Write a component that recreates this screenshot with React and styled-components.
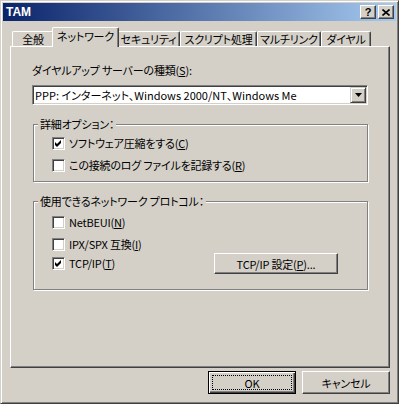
import React from "react";
import styled, { createGlobalStyle } from "styled-components";

const GlobalStyle = createGlobalStyle`
  html, body {
    margin: 0;
    padding: 0;
    background: #d4d0c8;
  }
  body {
    font-family: "Noto Sans CJK JP", "Liberation Sans", sans-serif;
    font-size: 11px;
    letter-spacing: -0.2px;
    font-feature-settings: "palt";
    color: #000;
  }
`;

const Window = styled.div`
  box-sizing: border-box;
  width: 399px;
  height: 404px;
  background: #d4d0c8;
  border: 1px solid;
  border-color: #d4d0c8 #404040 #404040 #d4d0c8;
  box-shadow: inset 1px 1px 0 #fff, inset -1px -1px 0 #808080;
  padding: 2px;
  display: flex;
  flex-direction: column;
`;

const TitleBar = styled.div`
  height: 18px;
  flex: none;
  background: linear-gradient(to right, #0a246a, #a6caf0);
  display: flex;
  align-items: center;
  padding: 0 2px 0 3px;
  gap: 2px;
`;

const TitleText = styled.div`
  flex: 1;
  color: #fff;
  font: bold 12px "Liberation Sans", sans-serif;
  letter-spacing: 0;
  line-height: 18px;
`;

const TitleButton = styled.div`
  box-sizing: border-box;
  width: 16px;
  height: 14px;
  background: #d4d0c8;
  border: 1px solid;
  border-color: #fff #404040 #404040 #fff;
  box-shadow: inset -1px -1px 0 #808080;
  display: flex;
  align-items: center;
  justify-content: center;
  font: bold 11px "Liberation Sans", sans-serif;
  line-height: 12px;
`;

const Body = styled.div`
  flex: 1;
  display: flex;
  flex-direction: column;
  padding: 0 6px 0 7px;
`;

const TabRow = styled.div`
  display: flex;
  align-items: flex-end;
  height: 20px;
  margin-top: 6px;
  margin-bottom: -1px;
  padding-left: 2px;
  position: relative;
  z-index: 1;
`;

const Tab = styled.div`
  box-sizing: border-box;
  flex: none;
  width: ${(p) => (p.$active ? p.$w + 4 : p.$w)}px;
  height: ${(p) => (p.$active ? 20 : 15)}px;
  margin: ${(p) => (p.$active ? "0 -2px" : "0 0 1px")};
  position: relative;
  z-index: ${(p) => (p.$active ? 2 : 1)};
  background: #d4d0c8;
  border-top: 1px solid #fff;
  border-left: 1px solid #fff;
  border-right: 1px solid #404040;
  border-radius: 2px 2px 0 0;
  box-shadow: inset -1px 0 0 #808080;
  display: flex;
  align-items: center;
  justify-content: center;
  padding-bottom: ${(p) => (p.$active ? 2 : 0)}px;
  line-height: 13px;
  white-space: nowrap;
`;

const Panel = styled.div`
  box-sizing: border-box;
  height: 322px;
  border: 1px solid;
  border-color: #fff #404040 #404040 #fff;
  box-shadow: inset -1px -1px 0 #808080;
  padding: 16px 21px 0 21px;
  display: flex;
  flex-direction: column;
`;

const FieldLabel = styled.div`
  height: 14px;
  line-height: 14px;
  white-space: nowrap;
`;

const Combo = styled.div`
  box-sizing: border-box;
  height: 20px;
  margin-top: 8px;
  background: #fff;
  border: 1px solid;
  border-color: #808080 #fff #fff #808080;
  box-shadow: inset 1px 1px 0 #404040, inset -1px -1px 0 #d4d0c8;
  display: flex;
  align-items: center;
  padding: 0 1px 0 2px;
`;

const ComboText = styled.div`
  flex: 1;
  line-height: 14px;
  letter-spacing: 0;
  white-space: nowrap;
`;

const DropButton = styled.div`
  box-sizing: border-box;
  width: 16px;
  height: 16px;
  background: #d4d0c8;
  border: 1px solid;
  border-color: #d4d0c8 #404040 #404040 #d4d0c8;
  box-shadow: inset 1px 1px 0 #fff, inset -1px -1px 0 #808080;
  display: flex;
  align-items: center;
  justify-content: center;
`;

const Group = styled.fieldset`
  margin: 12px 0 0 1px;
  padding: 0;
  min-width: 0;
  border: 1px solid #808080;
  box-shadow: inset 1px 1px 0 #fff, 1px 1px 0 #fff;
`;

const Legend = styled.legend`
  margin-left: 4px;
  padding: 0 2px;
  line-height: 14px;
  height: 14px;
  background: #d4d0c8;
  white-space: nowrap;
`;

const GroupBody = styled.div`
  display: flex;
  flex-direction: column;
  padding: ${(p) => p.$pt}px 0 ${(p) => p.$pb}px 18px;
`;

const CheckRow = styled.div`
  display: flex;
  align-items: center;
  gap: 4px;
  height: ${(p) => p.$h || 13}px;
  margin-top: ${(p) => p.$mt || 0}px;
  line-height: 13px;
  white-space: nowrap;
`;

const Box = styled.span`
  box-sizing: border-box;
  flex: none;
  width: 13px;
  height: 13px;
  background: #fff;
  border: 1px solid;
  border-color: #808080 #fff #fff #808080;
  box-shadow: inset 1px 1px 0 #404040, inset -1px -1px 0 #d4d0c8;
  display: flex;
  align-items: center;
  justify-content: center;
`;

const PushButton = styled.div`
  box-sizing: border-box;
  flex: none;
  position: relative;
  width: ${(p) => p.$w}px;
  height: ${(p) => p.$h}px;
  background: #d4d0c8;
  border: 1px solid;
  border-color: ${(p) => (p.$default ? "#000" : "#fff #404040 #404040 #fff")};
  box-shadow: ${(p) =>
    p.$default
      ? "inset 1px 1px 0 #fff, inset -1px -1px 0 #404040, inset -2px -2px 0 #808080"
      : "inset -1px -1px 0 #808080"};
  display: flex;
  align-items: center;
  justify-content: center;
  line-height: 14px;
  white-space: nowrap;
  ${(p) =>
    p.$default &&
    `
    &::after {
      content: "";
      position: absolute;
      inset: 3px;
      border: 1px dotted #000;
    }
  `}
`;

const ProtoButton = styled(PushButton)`
  margin-left: auto;
  margin-right: 29px;
`;

const Footer = styled.div`
  display: flex;
  justify-content: flex-end;
  gap: 6px;
  margin-top: 3px;
`;

const Check = ({ on }) => (
  <Box>
    {on && (
      <svg width="7" height="7" viewBox="0 0 7 7">
        <path d="M0 2 L2 4 L6 0 L6 3 L2 7 L0 5 Z" fill="#000" />
      </svg>
    )}
  </Box>
);

const tabs = [
  { label: "全般", w: 42 },
  { label: "ネットワーク", w: 63, active: true },
  { label: "セキュリティ", w: 63 },
  { label: "スクリプト処理", w: 77 },
  { label: "マルチリンク", w: 64 },
  { label: "ダイヤル", w: 50 },
];

export default function App() {
  return (
    <>
      <GlobalStyle />
      <Window>
        <TitleBar>
          <TitleText>TAM</TitleText>
          <TitleButton>?</TitleButton>
          <TitleButton>
            <svg width="8" height="7" viewBox="0 0 8 7">
              <path d="M0.5 0.5 L7.5 6.5 M7.5 0.5 L0.5 6.5" stroke="#000" strokeWidth="1.6" />
            </svg>
          </TitleButton>
        </TitleBar>
        <Body>
          <TabRow>
            {tabs.map((t) => (
              <Tab key={t.label} $w={t.w} $active={t.active}>
                {t.label}
              </Tab>
            ))}
          </TabRow>
          <Panel>
            <FieldLabel>
              ダイヤルアップ サーバーの種類(<u>S</u>):
            </FieldLabel>
            <Combo>
              <ComboText>PPP: インターネット、Windows 2000/NT、Windows Me</ComboText>
              <DropButton>
                <svg width="7" height="4" viewBox="0 0 7 4">
                  <polygon points="0,0 7,0 3.5,4" fill="#000" />
                </svg>
              </DropButton>
            </Combo>
            <Group>
              <Legend>詳細オプション：</Legend>
              <GroupBody $pt={6} $pb={9}>
                <CheckRow>
                  <Check on />
                  <span>
                    ソフトウェア圧縮をする(<u>C</u>)
                  </span>
                </CheckRow>
                <CheckRow $mt={9}>
                  <Check />
                  <span>
                    この接続のログ ファイルを記録する(<u>R</u>)
                  </span>
                </CheckRow>
              </GroupBody>
            </Group>
            <Group>
              <Legend>使用できるネットワーク プロトコル：</Legend>
              <GroupBody $pt={8} $pb={15}>
                <CheckRow>
                  <Check />
                  <span>
                    NetBEUI(<u>N</u>)
                  </span>
                </CheckRow>
                <CheckRow $mt={9}>
                  <Check />
                  <span>
                    IPX/SPX 互換(<u>I</u>)
                  </span>
                </CheckRow>
                <CheckRow $mt={2} $h={21}>
                  <Check on />
                  <span>
                    TCP/IP(<u>T</u>)
                  </span>
                  <ProtoButton $w={124} $h={21}>
                    TCP/IP 設定(<u>P</u>)...
                  </ProtoButton>
                </CheckRow>
              </GroupBody>
            </Group>
          </Panel>
          <Footer>
            <PushButton $w={88} $h={23} $default>
              OK
            </PushButton>
            <PushButton $w={88} $h={23}>
              キャンセル
            </PushButton>
          </Footer>
        </Body>
      </Window>
    </>
  );
}
